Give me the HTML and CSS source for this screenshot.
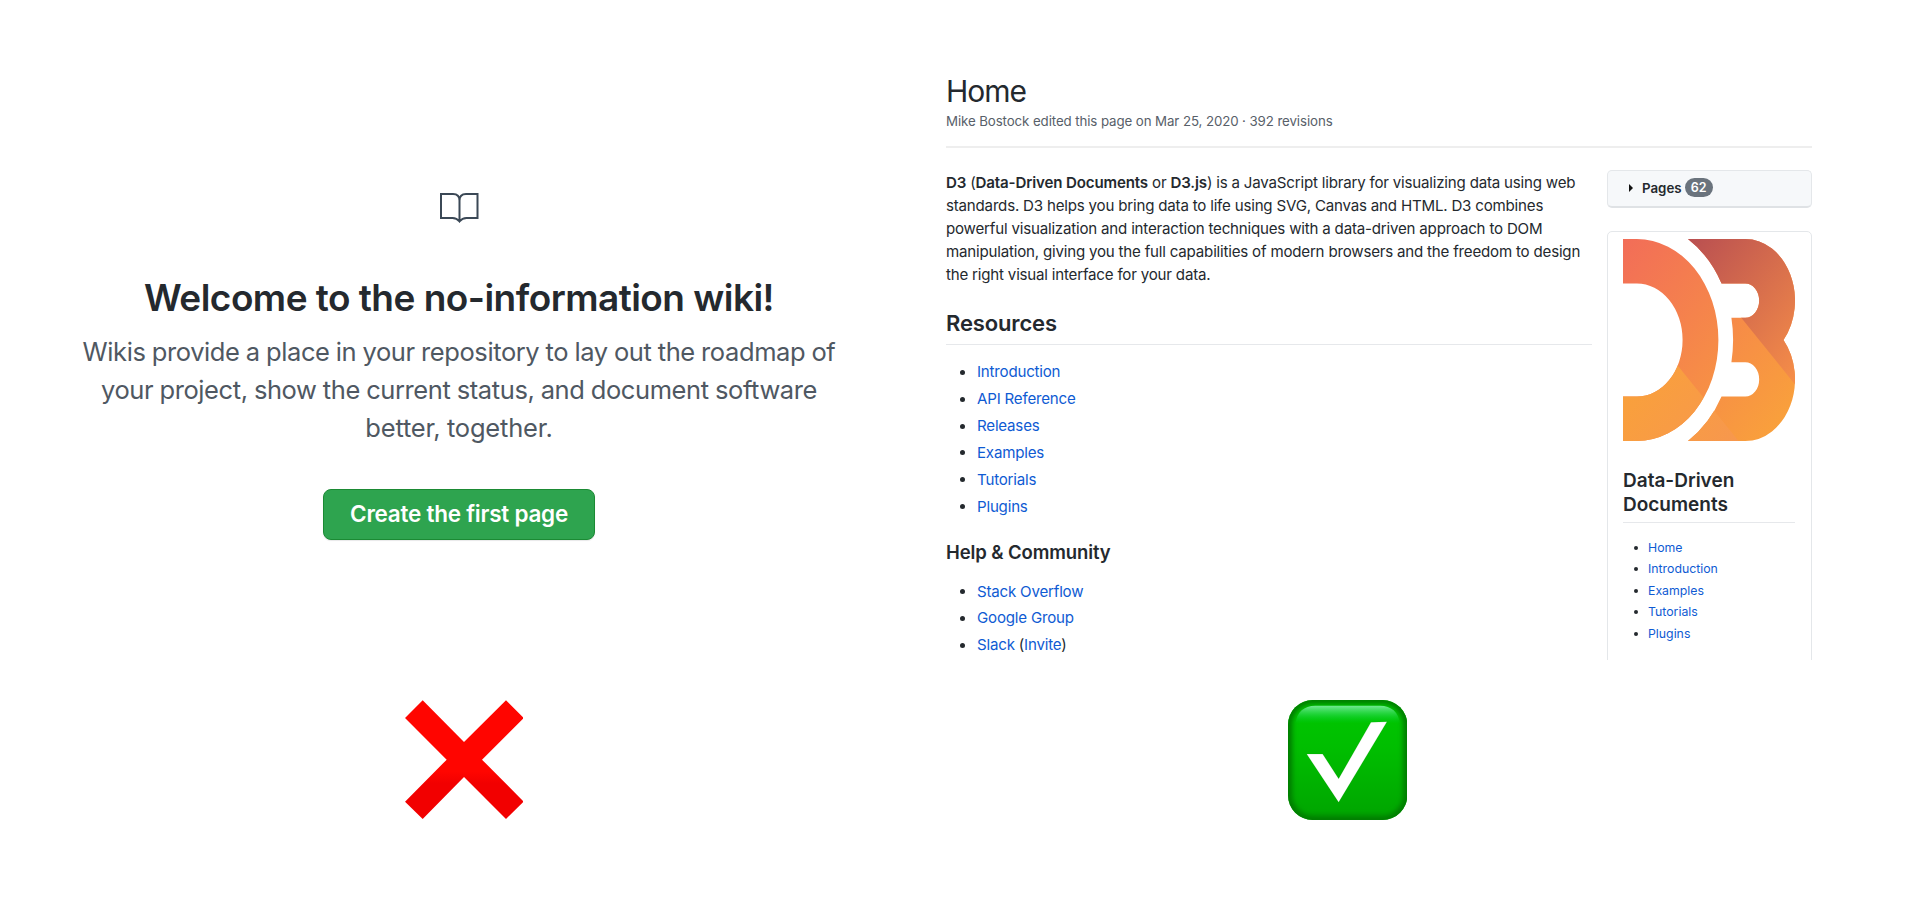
FILE: index.html
```html
<!DOCTYPE html>
<html lang="en">
<head>
<meta charset="utf-8">
<title>Wiki comparison</title>
<link rel="stylesheet" href="styles.css">
</head>
<body>
<main class="board">
  <section class="empty">
    <svg class="book" viewBox="0 0 39 30" fill="none" stroke="currentColor" stroke-width="2"><path d="M19.500 28.500C17.500 26 15.500 25 12.500 25H1V1H13C17 1 19.500 3.500 19.500 7.500C19.500 3.500 22 1 26 1H37.500V25H26.500C23.500 25 21.500 26 19.500 28.500zM19.500 6V28"/></svg>
    <h1 class="empty-title">Welcome to the no-information wiki!</h1>
    <p class="empty-text">Wikis provide a place in your repository to lay out the roadmap of<br>your project, show the current status, and document software<br><span class="last">better, together.</span></p>
    <button class="create">Create the first page</button>
  </section>
  <section class="wiki">
    <header class="wiki-head">
      <h1 class="page-title">Home</h1>
      <p class="meta">Mike Bostock edited this page on Mar 25, 2020 · 392 revisions</p>
    </header>
    <div class="wiki-cols">
      <article class="content">
        <p class="intro"><b>D3</b> (<b>Data-Driven Documents</b> or <b>D3.js</b>) is a JavaScript library for visualizing data using web<br>standards. D3 helps you bring data to life using SVG, Canvas and HTML. D3 combines<br>powerful visualization and interaction techniques with a data-driven approach to DOM<br>manipulation, giving you the full capabilities of modern browsers and the freedom to design<br>the right visual interface for your data.</p>
        <h2 class="resources">Resources</h2>
        <ul class="links">
          <li><a>Introduction</a></li>
          <li><a>API Reference</a></li>
          <li><a>Releases</a></li>
          <li><a>Examples</a></li>
          <li><a>Tutorials</a></li>
          <li><a>Plugins</a></li>
        </ul>
        <h3 class="help">Help &amp; Community</h3>
        <ul class="links">
          <li><a>Stack Overflow</a></li>
          <li><a>Google Group</a></li>
          <li><a>Slack</a> (<a>Invite</a>)</li>
        </ul>
      </article>
      <aside class="side">
        <div class="pages"><i class="caret"></i><span class="pages-label">Pages</span><span class="badge">62</span></div>
        <div class="card">
          <svg class="logo" viewBox="0 0 96 91" preserveAspectRatio="none">
            <defs>
              <linearGradient id="low" gradientUnits="userSpaceOnUse" x1="7" y1="64" x2="50" y2="107"><stop offset="0" stop-color="#f9a03c"/><stop offset="1" stop-color="#f7974e"/></linearGradient>
              <linearGradient id="mid" gradientUnits="userSpaceOnUse" x1="2" y1="-2" x2="87" y2="84"><stop offset="0" stop-color="#f26d58"/><stop offset="1" stop-color="#f9a03c"/></linearGradient>
              <linearGradient id="top" gradientUnits="userSpaceOnUse" x1="45" y1="-10" x2="108" y2="53"><stop offset="0" stop-color="#b84e51"/><stop offset="1" stop-color="#f68e48"/></linearGradient>
              <clipPath id="d"><path d="M0 0h7.750a45.500 45.500 0 1 1 0 91H0V71h7.750a25.500 25.500 0 1 0 0-51H0z"/></clipPath>
              <clipPath id="three"><path d="M36.250 0h32a27.750 27.750 0 0 1 21.331 45.500A27.750 27.750 0 0 1 68.250 91h-32a53.690 53.690 0 0 0 18.746-20H68.250a7.750 7.750 0 1 0 0-15.500H60.500a53.690 53.690 0 0 0 0-20h7.750a7.750 7.750 0 1 0 0-15.500H54.997A53.690 53.690 0 0 0 36.250 0z"/></clipPath>
            </defs>
            <g clip-path="url(#d)"><path fill="url(#mid)" d="M0 0h96v91H0z"/><path fill="url(#low)" d="M0 26.500L65 91.500H0z"/></g>
            <g clip-path="url(#three)"><path fill="url(#mid)" d="M0 0h96v91H0z"/><path fill="url(#low)" d="M0 26.500L65 91.500H0z"/><path fill="url(#top)" d="M30.500 0H97v66.500z"/></g>
          </svg>
          <h2 class="side-title">Data-Driven<br>Documents</h2>
          <ul class="side-links">
            <li><a>Home</a></li>
            <li><a>Introduction</a></li>
            <li><a>Examples</a></li>
            <li><a>Tutorials</a></li>
            <li><a>Plugins</a></li>
          </ul>
        </div>
      </aside>
    </div>
  </section>
</main>
<footer class="verdicts">
  <svg class="cross" viewBox="44 61 356 358"><defs><linearGradient id="red" x1="0" y1="0" x2="0" y2="1"><stop offset=".6" stop-color="#ff0500"/><stop offset=".7" stop-color="#f20000"/></linearGradient></defs><path fill="url(#red)" d="M97 62L221 187L347 62L400 115L275 240L400 366L347 418L221 292L97 418L44 366L169 240L44 115z"/></svg>
  <svg class="check" viewBox="54 60 358 360"><defs><linearGradient id="green" x1="0" y1="0" x2="0" y2="1"><stop offset="0" stop-color="#00c800"/><stop offset=".4" stop-color="#00be00"/><stop offset="1" stop-color="#00a400"/></linearGradient><linearGradient id="shine" x1="0" y1="0" x2="0" y2="1"><stop offset="0" stop-color="#74ea94"/><stop offset="1" stop-color="#00d63c" stop-opacity="0"/></linearGradient><clipPath id="tile"><rect x="54" y="60" width="358" height="360" rx="74"/></clipPath><filter id="soft"><feGaussianBlur stdDeviation="8"/></filter></defs><g clip-path="url(#tile)"><rect x="54" y="60" width="358" height="360" fill="url(#green)"/><rect x="54" y="60" width="358" height="360" rx="74" fill="none" stroke="#007d00" stroke-width="26" filter="url(#soft)"/><path fill="url(#shine)" d="M76 130Q84 78 136 77H330Q382 78 390 130z"/></g><path fill="#fff" stroke="#078507" stroke-opacity=".4" d="M110 222H158L206 296L303 127L351 125L206 367z"/></svg>
</footer>
</body>
</html>
```
FILE: styles.css
```css
* { box-sizing: border-box; }
body { margin: 0; width: 1920px; height: 900px; overflow: hidden; background: #fff; color: #24292e; font-family: Inter, "Liberation Sans", sans-serif; }
h1, h2, h3, p, ul { margin: 0; padding: 0; }
.board { display: grid; grid-template-columns: 918px 866px; column-gap: 28px; height: 660px; overflow: hidden; }
.empty { display: flex; flex-direction: column; align-items: center; padding-top: 193px; white-space: nowrap; }
.book { width: 39px; height: 30px; color: #3b4856; }
.empty-title { margin-top: 51.500px; font-size: 37px; line-height: 46px; font-weight: 600; letter-spacing: -.53px; }
.empty-text { margin-top: 12px; font-size: 25.500px; line-height: 38.330px; letter-spacing: -.4px; word-spacing: -.5px; text-align: center; color: #4f5862; }
.last { letter-spacing: -.2px; }
.create { margin-top: 41.500px; width: 272px; height: 51px; padding: 0 0 1px; border: 1px solid #1b8a34; border-radius: 8px; background: #2ea44f; box-shadow: 0 1px 1px rgba(27,31,35,.1); color: #fff; font: 600 22.500px Inter, sans-serif; letter-spacing: -.25px; }
.wiki { padding-top: 72px; white-space: nowrap; }
.wiki-head { height: 76px; border-bottom: 2px solid #eee; }
.page-title { font-size: 30px; line-height: 38px; font-weight: 400; letter-spacing: -1px; }
.meta { margin-top: 1.300px; font-size: 13.300px; line-height: 20px; letter-spacing: -.1px; color: #586069; }
.wiki-cols { display: grid; grid-template-columns: 646px 205px; column-gap: 15px; }
.content { padding-top: 23px; }
.intro { font-size: 15.100px; line-height: 23px; letter-spacing: -.2px; }
b { font-weight: 600; letter-spacing: -.15px; }
.resources { margin-top: 23.300px; padding-bottom: 6.500px; border-bottom: 1px solid #e6e8eb; font-size: 22px; line-height: 28px; font-weight: 600; letter-spacing: -.15px; }
.links { margin-top: 15.600px; padding-left: 31px; font-size: 15.100px; line-height: 23px; letter-spacing: -.2px; list-style: none; }
.links li + li { margin-top: 3.850px; }
.links li::before { content: ""; float: left; width: 5px; height: 5px; margin: 9.500px 0 0 -17px; border-radius: 50%; background: #24292e; }
.links a, .side-links a { color: #0f5bd3; }
.help { margin-top: 22.400px; font-size: 18.500px; line-height: 24px; font-weight: 600; letter-spacing: -.1px; }
.help + .links { margin-top: 15.600px; }
.side { padding-top: 22px; }
.pages { display: flex; align-items: center; height: 38px; padding: 0 0 2px 21px; border: 1px solid #e4e7ea; border-bottom: 2px solid #dfe2e5; border-radius: 5px; background: #f6f8fa; font-size: 13.300px; font-weight: 600; }
.caret { border: 4px solid transparent; border-left: 4px solid #111; border-right: 0; margin-right: 9px; }
.badge { margin-left: 3px; width: 28px; height: 19px; border-radius: 10px; background: #6a737d; color: #fff; text-align: center; font-size: 12.500px; line-height: 19px; }
.card { height: 450px; margin-top: 23px; padding: 7px 16px 7px 15px; border: 1px solid #e4e7ea; border-radius: 5px; }
.logo { display: block; width: 172px; height: 202px; }
.side-title { margin-top: 28px; padding-bottom: 5px; border-bottom: 1px solid #e6e8eb; font-size: 19px; line-height: 24px; font-weight: 600; }
.side-links { margin-top: 13.500px; padding-left: 25px; list-style: none; font-size: 12.300px; line-height: 21.500px; }
.side-links li::before { content: ""; float: left; width: 4px; height: 4px; margin: 9px 0 0 -14px; border-radius: 50%; background: #24292e; }
.verdicts { display: flex; padding: 40px 0 0 404.600px; }
.cross { width: 118.700px; height: 119.300px; }
.check { width: 119.300px; height: 120px; margin-left: 764.700px; }
```
